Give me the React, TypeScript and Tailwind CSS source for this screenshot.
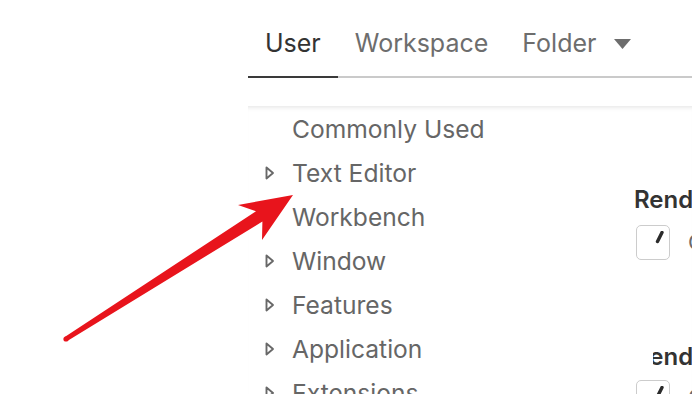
const tabs = [
  { label: "User", active: true },
  { label: "Workspace", active: false },
  { label: "Folder", active: false, menu: true },
];

const sections = [
  { label: "Commonly Used", expandable: false },
  { label: "Text Editor", expandable: true },
  { label: "Workbench", expandable: false },
  { label: "Window", expandable: true },
  { label: "Features", expandable: true },
  { label: "Application", expandable: true },
  { label: "Extensions", expandable: true },
];

function Caret() {
  return (
    <svg width="10" height="14" viewBox="0 0 10 14" className="shrink-0">
      <path d="M1.5 1.5 L8 7 L1.5 12.5 Z" fill="none" stroke="#686868" strokeWidth="1.9" strokeLinejoin="round" />
    </svg>
  );
}

function CheckBox() {
  return (
    <div className="flex h-[35px] w-[34px] shrink-0 items-start justify-center rounded-[5px] border border-[#cccccc] pt-[5px]">
      <svg width="14" height="14" viewBox="0 0 14 14" className="ml-[12px]">
        <path d="M10 1.5 L5.5 10.5" stroke="#2b2b2b" strokeWidth="3.4" strokeLinecap="round" />
      </svg>
    </div>
  );
}

export default function App() {
  return (
    <div className="relative flex h-[394px] w-[692px] overflow-hidden bg-white font-['Inter','Liberation_Sans',sans-serif]">
      <div className="w-[248px] shrink-0" />

      <div className="flex min-w-0 flex-1 flex-col">
        <div className="flex border-b-2 border-[#cacaca]">
          {tabs.map((tab) => (
            <div
              key={tab.label}
              className={`-mb-[2px] flex h-[78px] items-center gap-[18px] border-b-2 px-[17px] pt-[12px] text-[25px] ${tab.active ? "border-[#3a3a3a] text-[#333333]" : "border-transparent text-[#6d6d6d]"}`}
            >
              {tab.label}
              {tab.menu && (
                <svg width="17" height="10" viewBox="0 0 17 10">
                  <path d="M0 0 H17 L8.5 10 Z" fill="#6d6d6d" />
                </svg>
              )}
            </div>
          ))}
        </div>

        <div className="h-[28px] shrink-0" />

        <div className="flex min-h-0 flex-1 shadow-[inset_0_5px_5px_-4px_rgba(0,0,0,0.12)]">
          <div className="w-[386px] shrink-0 pt-[1px]">
            {sections.map((s) => (
              <div key={s.label} className="flex h-[44px] items-center text-[24.6px] text-[#666666]">
                <div className="flex w-[44px] shrink-0 pl-[17px]">{s.expandable && <Caret />}</div>
                <span>{s.label}</span>
              </div>
            ))}
          </div>

          <div className="min-w-0 flex-1 overflow-hidden pt-[79px] whitespace-nowrap">
            <div className="text-[24px] font-semibold leading-[29px] text-[#333333]">Rendering</div>
            <div className="mt-[11px] flex items-center gap-[18px] pl-[2px]">
              <CheckBox />
              <span className="text-[22px] text-[#6a6a6a]">Controls</span>
            </div>

            <div className="mt-[82px] ml-[19px] overflow-hidden">
              <div className="-ml-[19px] text-[24px] font-semibold leading-[29px] text-[#333333]">Rendering</div>
            </div>
            <div className="mt-[9px] flex items-center gap-[18px] pl-[2px]">
              <CheckBox />
              <span className="text-[22px] text-[#6a6a6a]">Controls</span>
            </div>
          </div>
        </div>
      </div>

      <svg className="pointer-events-none absolute inset-0" width="692" height="394" viewBox="0 0 692 394">
        <polygon
          points="293,195 238,205 256,211.3 64.7,336.9 67.3,341.1 262.4,221.5 262,240"
          fill="#e8141c"
        />
        <circle cx="66" cy="339" r="2.6" fill="#e8141c" />
      </svg>
    </div>
  );
}
